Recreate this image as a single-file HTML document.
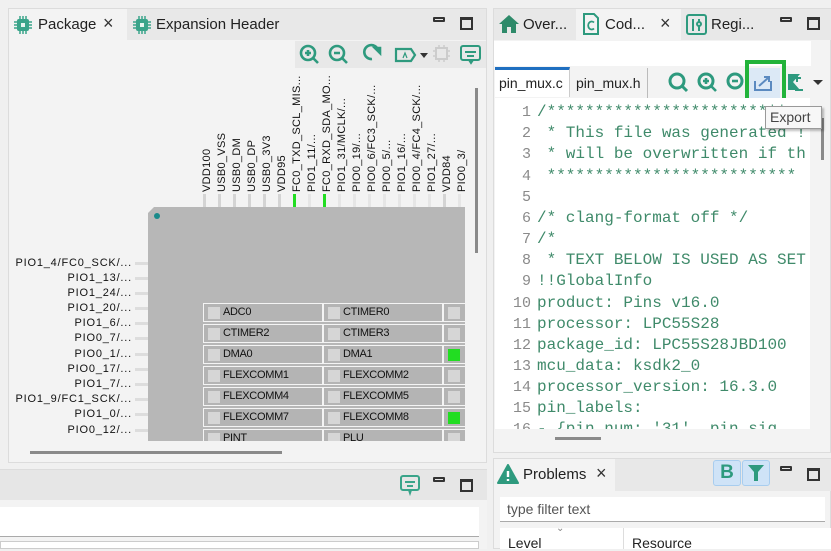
<!DOCTYPE html>
<html><head><meta charset="utf-8"><style>
*{margin:0;padding:0;box-sizing:border-box}
body{width:831px;height:549px;overflow:hidden;background:#f0f0f0;font-family:"Liberation Sans",sans-serif;position:relative}
.a{position:absolute}
.tabt{font-size:15px;color:#222;white-space:nowrap}
.vl{position:absolute;bottom:357px;transform-origin:left bottom;transform:rotate(-90deg);font-size:11px;letter-spacing:0.3px;color:#111;white-space:nowrap;font-family:"Liberation Sans",sans-serif}
.stub{position:absolute;top:194px;width:3px;height:13px;background:#d4d4d4}
.ll{position:absolute;right:699px;font-size:11px;letter-spacing:0.8px;color:#111;white-space:nowrap}
.hs{position:absolute;left:135px;width:13px;height:3px;background:#ddd}
.cell{position:absolute;height:19px;background:#b4b4b4;border:1px solid #f4f4f4;font-size:11px;color:#111;padding-left:19px;line-height:17px;letter-spacing:-0.3px}
.cell i{position:absolute;left:4px;top:3px;width:12px;height:12px;background:#d6d6d6}
.cell i.g{background:#22dd22}
.ln{position:absolute;left:495px;width:36px;text-align:right;font-family:"Liberation Mono",monospace;font-size:15px;color:#8a8a8a}
.cd{position:absolute;left:537px;font-family:"Liberation Mono",monospace;font-size:16px;color:#3f8a6a;white-space:pre}
.min{position:absolute;width:12px;height:5px;border:2px solid #333;border-radius:1px}
.max{position:absolute;width:13px;height:13px;border:2px solid #333;border-top-width:3px}
</style></head><body>

<!-- LEFT PANEL -->
<div class="a" style="left:8px;top:8px;width:479px;height:455px;border:1px solid #dcdcdc;background:#f3f3f3"></div>
<div class="a" style="left:9px;top:9px;width:477px;height:31px;background:#e8e8e8"></div>
<div class="a" style="left:9px;top:9px;width:118px;height:32px;background:#f3f3f3"></div>
<svg class="a" style="left:13px;top:15px" width="20" height="20" viewBox="0 0 20 20"><rect x="4" y="4" width="12" height="12" rx="2" fill="#3aa48a"/><rect x="8" y="8" width="4" height="4" fill="#e8f5f0"/><g stroke="#3aa48a" stroke-width="1.5"><path d="M1 7h3M1 10h3M1 13h3M16 7h3M16 10h3M16 13h3M7 1v3M10 1v3M13 1v3M7 16v3M10 16v3M13 16v3"/></g></svg>
<div class="a tabt" style="left:38px;top:16px">Package</div>
<div class="a" style="left:103px;top:13px;font-size:18px;color:#333">×</div>
<svg class="a" style="left:132px;top:15px" width="20" height="20" viewBox="0 0 20 20"><rect x="4" y="4" width="12" height="12" rx="2" fill="#3aa48a"/><rect x="8" y="8" width="4" height="4" fill="#e8f5f0"/><g stroke="#3aa48a" stroke-width="1.5"><path d="M1 7h3M1 10h3M1 13h3M16 7h3M16 10h3M16 13h3M7 1v3M10 1v3M13 1v3M7 16v3M10 16v3M13 16v3"/></g></svg>
<div class="a tabt" style="left:156px;top:16px">Expansion Header</div>
<div class="min" style="left:433px;top:17px"></div>
<div class="max" style="left:460px;top:17px"></div>

<!-- toolbar -->
<div class="a" style="left:295px;top:41px;width:191px;height:27px;background:#e8e8e8"></div>
<svg class="a" style="left:297px;top:43px" width="190" height="24" viewBox="0 0 190 24" fill="none" stroke="#2e9a7e" stroke-width="2.6">
<circle cx="11" cy="10" r="7"/><path d="M16 15l5 5M8 10h6M11 7v6"/>
<circle cx="40" cy="10" r="7"/><path d="M45 15l5 5M37 10h6"/>
<path d="M75 16a7 7 0 1 1 6-9"/><path d="M78 5h5v5z" fill="#2e9a7e"/>
<path d="M99 6h15l4 6-4 6h-15z" stroke-width="2.2"/><path d="M106 15l2-5 2 5" stroke-width="1.2"/>
<path d="M123 10h8l-4 5z" fill="#333" stroke="none"/>
<rect x="139" y="5" width="11" height="11" stroke="#ccc" stroke-width="2"/><path d="M136 8h3M136 13h3M150 8h3M150 13h3M142 2v3M147 2v3M142 16v3M147 16v3" stroke="#ccc" stroke-width="1.5"/>
<rect x="164" y="3" width="19" height="14" rx="2" stroke-width="2"/><path d="M168 9h11M170 13h7M172 17l2 3 2-3" stroke-width="2"/>
</svg>

<!-- scrollbars -->
<div class="a" style="left:475px;top:88px;width:3px;height:165px;background:#8a8a8a"></div>
<div class="a" style="left:30px;top:451px;width:252px;height:3px;background:#8a8a8a"></div>

<!-- top vertical labels -->
<div class="vl" style="left:213px">VDD100</div>
<div class="vl" style="left:228px">USB0_VSS</div>
<div class="vl" style="left:243px">USB0_DM</div>
<div class="vl" style="left:258px">USB0_DP</div>
<div class="vl" style="left:273px">USB0_3V3</div>
<div class="vl" style="left:288px">VDD95</div>
<div class="vl" style="left:303px">FC0_TXD_SCL_MIS...</div>
<div class="vl" style="left:318px">PIO1_11/...</div>
<div class="vl" style="left:333px">FC0_RXD_SDA_MO...</div>
<div class="vl" style="left:348px">PIO1_31/MCLK/...</div>
<div class="vl" style="left:363px">PIO0_19/...</div>
<div class="vl" style="left:378px">PIO0_6/FC3_SCK/...</div>
<div class="vl" style="left:393px">PIO0_5/...</div>
<div class="vl" style="left:408px">PIO1_16/...</div>
<div class="vl" style="left:423px">PIO0_4/FC4_SCK/...</div>
<div class="vl" style="left:438px">PIO1_27/...</div>
<div class="vl" style="left:453px">VDD84</div>
<div class="vl" style="left:468px">PIO0_3/</div>
<div class="stub" style="left:203px"></div><div class="stub" style="left:218px"></div><div class="stub" style="left:233px"></div><div class="stub" style="left:248px"></div><div class="stub" style="left:263px"></div><div class="stub" style="left:278px"></div><div class="stub" style="left:293px;background:#22dd22"></div><div class="stub" style="left:308px;background:#e6e6e6"></div><div class="stub" style="left:323px;background:#22dd22"></div><div class="stub" style="left:338px;background:#e6e6e6"></div><div class="stub" style="left:353px;background:#e6e6e6"></div><div class="stub" style="left:368px;background:#e6e6e6"></div><div class="stub" style="left:383px;background:#e6e6e6"></div><div class="stub" style="left:398px;background:#e6e6e6"></div><div class="stub" style="left:413px;background:#e6e6e6"></div><div class="stub" style="left:428px;background:#e6e6e6"></div><div class="stub" style="left:443px"></div><div class="stub" style="left:458px;background:#e6e6e6"></div>

<!-- chip -->
<div class="a" style="left:148px;top:207px;width:317px;height:234px;background:#b7b7b7;clip-path:polygon(6px 0,100% 0,100% 100%,0 100%,0 6px)"></div>
<div class="a" style="left:154px;top:213px;width:6px;height:6px;border-radius:50%;background:#1a8a8a"></div>

<!-- left labels -->
<div class="ll" style="top:257px">PIO1_4/FC0_SCK/...</div><div class="hs" style="top:262px"></div>
<div class="ll" style="top:272px">PIO1_13/...</div><div class="hs" style="top:277px"></div>
<div class="ll" style="top:287px">PIO1_24/...</div><div class="hs" style="top:292px"></div>
<div class="ll" style="top:302px">PIO1_20/...</div><div class="hs" style="top:307px"></div>
<div class="ll" style="top:317px">PIO1_6/...</div><div class="hs" style="top:322px"></div>
<div class="ll" style="top:332px">PIO0_7/...</div><div class="hs" style="top:337px"></div>
<div class="ll" style="top:348px">PIO0_1/...</div><div class="hs" style="top:353px"></div>
<div class="ll" style="top:363px">PIO0_17/...</div><div class="hs" style="top:368px"></div>
<div class="ll" style="top:378px">PIO1_7/...</div><div class="hs" style="top:383px"></div>
<div class="ll" style="top:393px">PIO1_9/FC1_SCK/...</div><div class="hs" style="top:398px"></div>
<div class="ll" style="top:408px">PIO1_0/...</div><div class="hs" style="top:413px"></div>
<div class="ll" style="top:424px">PIO0_12/...</div><div class="hs" style="top:429px"></div>

<!-- peripheral grid -->
<div class="a" style="left:203px;top:303px;width:262px;height:138px;overflow:hidden">
<div class="cell" style="left:0;top:0;width:120px"><i></i>ADC0</div><div class="cell" style="left:120px;top:0;width:120px"><i></i>CTIMER0</div><div class="cell" style="left:240px;top:0;width:30px"><i></i></div>
<div class="cell" style="left:0;top:21px;width:120px"><i></i>CTIMER2</div><div class="cell" style="left:120px;top:21px;width:120px"><i></i>CTIMER3</div><div class="cell" style="left:240px;top:21px;width:30px"><i></i></div>
<div class="cell" style="left:0;top:42px;width:120px"><i></i>DMA0</div><div class="cell" style="left:120px;top:42px;width:120px"><i></i>DMA1</div><div class="cell" style="left:240px;top:42px;width:30px"><i class="g"></i></div>
<div class="cell" style="left:0;top:63px;width:120px"><i></i>FLEXCOMM1</div><div class="cell" style="left:120px;top:63px;width:120px"><i></i>FLEXCOMM2</div><div class="cell" style="left:240px;top:63px;width:30px"><i></i></div>
<div class="cell" style="left:0;top:84px;width:120px"><i></i>FLEXCOMM4</div><div class="cell" style="left:120px;top:84px;width:120px"><i></i>FLEXCOMM5</div><div class="cell" style="left:240px;top:84px;width:30px"><i></i></div>
<div class="cell" style="left:0;top:105px;width:120px"><i></i>FLEXCOMM7</div><div class="cell" style="left:120px;top:105px;width:120px"><i></i>FLEXCOMM8</div><div class="cell" style="left:240px;top:105px;width:30px"><i class="g"></i></div>
<div class="cell" style="left:0;top:126px;width:120px"><i></i>PINT</div><div class="cell" style="left:120px;top:126px;width:120px"><i></i>PLU</div><div class="cell" style="left:240px;top:126px;width:30px"><i></i></div>
</div>

<!-- bottom-left panel -->
<div class="a" style="left:0;top:469px;width:487px;height:80px;background:#f3f3f3;border-top:1px solid #dcdcdc"></div>
<div class="a" style="left:0;top:470px;width:487px;height:30px;background:#e6e6e6"></div>
<svg class="a" style="left:399px;top:474px" width="22" height="22" viewBox="0 0 22 22" fill="none" stroke="#3aa48a" stroke-width="2"><rect x="2" y="2" width="18" height="14" rx="2"/><path d="M6 8h10M8 12h6M10 16l1 3 1-3"/></svg>
<div class="min" style="left:433px;top:477px"></div>
<div class="max" style="left:460px;top:479px"></div>
<div class="a" style="left:0;top:507px;width:479px;height:30px;background:#fff;border-bottom:1px solid #aaa"></div>
<div class="a" style="left:0;top:541px;width:479px;height:8px;background:#fff;border:1px solid #ccc"></div>

<!-- RIGHT PANEL -->
<div class="a" style="left:493px;top:8px;width:338px;height:445px;border:1px solid #dcdcdc;background:#f3f3f3"></div>
<div class="a" style="left:494px;top:9px;width:337px;height:31px;background:#e8e8e8"></div>
<div class="a" style="left:576px;top:9px;width:105px;height:32px;background:#f3f3f3"></div>
<svg class="a" style="left:498px;top:13px" width="22" height="22" viewBox="0 0 22 22"><path d="M11 2L1 11h3v9h5v-6h4v6h5v-9h3z" fill="#2e8a6a"/></svg>
<div class="a tabt" style="left:523px;top:16px">Over...</div>
<svg class="a" style="left:582px;top:12px" width="18" height="24" viewBox="0 0 18 24" fill="none" stroke="#2e9a7e" stroke-width="2"><path d="M2 2h10l4 4v16H2z"/><path d="M12 10.5a3.5 4 0 1 0 0 6" stroke-width="1.8"/></svg>
<div class="a tabt" style="left:605px;top:16px">Cod...</div>
<div class="a" style="left:660px;top:13px;font-size:18px;color:#333">×</div>
<svg class="a" style="left:686px;top:14px" width="21" height="21" viewBox="0 0 21 21" fill="none" stroke="#2e9a7e" stroke-width="2"><rect x="1" y="1" width="19" height="19" rx="2"/><path d="M7 5v12M13 5v4M13 12v5" /><circle cx="13" cy="10" r="2"/></svg>
<div class="a tabt" style="left:711px;top:16px">Regi...</div>
<div class="min" style="left:780px;top:17px"></div>
<div class="max" style="left:807px;top:17px"></div>
<div class="a" style="left:494px;top:41px;width:317px;height:25px;background:#fff"></div>

<!-- subtabs -->
<div class="a" style="left:495px;top:67px;width:75px;height:30px;background:#fff;border-top:3px solid #1f6fc0;border-right:1px solid #ccc"></div>
<div class="a tabt" style="left:499px;top:75px;font-size:14px">pin_mux.c</div>
<div class="a" style="left:570px;top:68px;width:78px;height:30px;background:#f3f3f3;border-right:1px solid #bbb"></div>
<div class="a tabt" style="left:576px;top:75px;font-size:14px">pin_mux.h</div>
<svg class="a" style="left:666px;top:68px" width="165" height="30" viewBox="0 0 165 30" fill="none" stroke="#2e9a7e" stroke-width="3">
<circle cx="11" cy="13" r="7"/><path d="M16 18l5 5"/>
<circle cx="40" cy="13" r="7"/><path d="M45 18l5 5M37 13h6M40 10v6" stroke-width="2.6"/>
<circle cx="69" cy="13" r="7"/><path d="M66 13h6" stroke-width="2.6"/>
<rect x="80" y="0" width="34" height="30" fill="#dce9f6" stroke="none"/>
<path d="M89 13v9h16v-9" stroke="#5b8ac0" stroke-width="2"/><path d="M93 18l9-8M98 9h5v5" stroke="#5b8ac0" stroke-width="2"/>
<path d="M122 6h12l-7 8 7 8h-12z" fill="#2e9a7e" stroke="none"/><path d="M127 10h8M131 6v8M129 22h8" stroke="#2e9a7e" stroke-width="2"/>
<path d="M147 12h10l-5 5z" fill="#333" stroke="none"/>
</svg>
<div class="a" style="left:745px;top:60px;width:41px;height:45px;border:4px solid #22b33a"></div>

<!-- code -->
<div class="a" style="left:495px;top:98px;width:315px;height:331px;background:#fff;overflow:hidden">
<div style="position:relative;left:-495px;top:-98px">
<div class="ln" style="top:104px">1</div><div class="cd" style="top:103px">/*************************</div>
<div class="ln" style="top:125px">2</div><div class="cd" style="top:124px"> * This file was generated !</div>
<div class="ln" style="top:146px">3</div><div class="cd" style="top:145px"> * will be overwritten if th</div>
<div class="ln" style="top:168px">4</div><div class="cd" style="top:167px"> **************************</div>
<div class="ln" style="top:189px">5</div>
<div class="ln" style="top:210px">6</div><div class="cd" style="top:209px">/* clang-format off */</div>
<div class="ln" style="top:231px">7</div><div class="cd" style="top:230px">/*</div>
<div class="ln" style="top:252px">8</div><div class="cd" style="top:251px"> * TEXT BELOW IS USED AS SET</div>
<div class="ln" style="top:273px">9</div><div class="cd" style="top:272px">!!GlobalInfo</div>
<div class="ln" style="top:295px">10</div><div class="cd" style="top:294px">product: Pins v16.0</div>
<div class="ln" style="top:316px">11</div><div class="cd" style="top:315px">processor: LPC55S28</div>
<div class="ln" style="top:337px">12</div><div class="cd" style="top:336px">package_id: LPC55S28JBD100</div>
<div class="ln" style="top:358px">13</div><div class="cd" style="top:357px">mcu_data: ksdk2_0</div>
<div class="ln" style="top:379px">14</div><div class="cd" style="top:378px">processor_version: 16.3.0</div>
<div class="ln" style="top:400px">15</div><div class="cd" style="top:399px">pin_labels:</div>
<div class="ln" style="top:421px">16</div><div class="cd" style="top:420px">- {pin_num: '31', pin_sig</div>
</div></div>
<div class="a" style="left:495px;top:429px;width:316px;height:22px;background:#f3f3f3"></div>
<div class="a" style="left:555px;top:437px;width:46px;height:3px;background:#8a8a8a"></div>
<div class="a" style="left:821px;top:118px;width:3px;height:42px;background:#8a8a8a"></div>
<!-- tooltip -->
<div class="a" style="left:765px;top:106px;width:57px;height:23px;background:#f7f7f7;border:1px solid #999;box-shadow:2px 2px 2px rgba(0,0,0,.25);font-size:14px;color:#444;padding:2px 0 0 4px">Export</div>

<!-- problems panel -->
<div class="a" style="left:493px;top:458px;width:338px;height:91px;background:#f3f3f3;border:1px solid #dcdcdc"></div>
<div class="a" style="left:615px;top:459px;width:216px;height:32px;background:#e8e8e8"></div>
<svg class="a" style="left:497px;top:464px" width="22" height="20" viewBox="0 0 22 20"><path d="M11 1L21 19H1z" fill="#2e9a7e" stroke="#2e9a7e" stroke-linejoin="round" stroke-width="2"/><path d="M11 7v6M11 15v2" stroke="#fff" stroke-width="2.4"/></svg>
<div class="a tabt" style="left:523px;top:466px">Problems</div>
<div class="a" style="left:596px;top:463px;font-size:18px;color:#333">×</div>
<div class="a" style="left:713px;top:460px;width:28px;height:26px;background:#cfe3f7;border:1px solid #a8cdef;border-radius:3px;color:#2e9a7e;font-weight:bold;font-size:19px;text-align:center;line-height:24px">B</div>
<div class="a" style="left:742px;top:460px;width:28px;height:26px;background:#cfe3f7;border:1px solid #a8cdef;border-radius:3px"></div>
<svg class="a" style="left:747px;top:464px" width="18" height="18" viewBox="0 0 18 18"><path d="M1 1h16l-6 7v9h-4V8z" fill="#2e9a7e"/></svg>
<div class="min" style="left:780px;top:466px"></div>
<div class="max" style="left:807px;top:468px"></div>
<div class="a" style="left:500px;top:497px;width:325px;height:25px;background:#fff;border-bottom:1px solid #aaa;font-size:14px;color:#555;padding:4px 0 0 7px">type filter text</div>
<div class="a" style="left:500px;top:528px;width:331px;height:21px;background:#fff"></div>
<div class="a" style="left:623px;top:528px;width:1px;height:21px;background:#ddd"></div>
<div class="a" style="left:556px;top:523px;font-size:10px;color:#888">&#8964;</div>
<div class="a tabt" style="left:508px;top:535px;font-size:14px">Level</div>
<div class="a tabt" style="left:632px;top:535px;font-size:14px">Resource</div>
</body></html>
